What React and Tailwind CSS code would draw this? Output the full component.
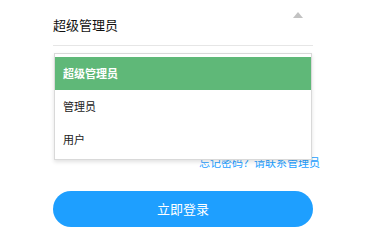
const font = { fontFamily: '"Noto Sans CJK SC", "Noto Sans", sans-serif' }

const options = ['超级管理员', '管理员', '用户']

export default function App() {
  return (
    <div className="w-[369px] h-[240px] bg-white overflow-hidden" style={font}>
      <div className="ml-[53px] w-[260px] relative">
        <div className="relative h-[46px] border-b border-[#e6e6e6] pt-[16px]">
          <span className="block text-[13px] leading-[18px] text-[#111]">超级管理员</span>
          <span className="absolute right-[10px] top-[12px] w-0 h-0 border-l-[5px] border-r-[5px] border-b-[6px] border-l-transparent border-r-transparent border-b-[#c2c2c2]"></span>
        </div>

        <div className="absolute left-[1px] right-[1px] top-[53px] z-10 bg-white border border-[#d9d9d9] shadow-[0_2px_4px_rgba(0,0,0,0.12)] pt-[3px] pb-[3px]">
          {options.map((o, i) => (
            <div
              key={o}
              className={
                i === 0
                  ? 'h-[33px] flex items-center pl-[8px] bg-[#5fb878] text-white font-bold text-[11px]'
                  : 'h-[33px] flex items-center pl-[8px] text-[#222] text-[11px]'
              }
            >
              {o}
            </div>
          ))}
        </div>

        <div className="mt-[109px] flex justify-end -mr-[7px]">
          <a className="text-[11px] leading-[14px] text-[#1e9fff]">忘记密码？请联系管理员</a>
        </div>

        <button className="mt-[22px] w-full h-[36px] rounded-full bg-[#1e9fff] text-white text-[13px] flex items-center justify-center">
          立即登录
        </button>
      </div>
    </div>
  )
}
